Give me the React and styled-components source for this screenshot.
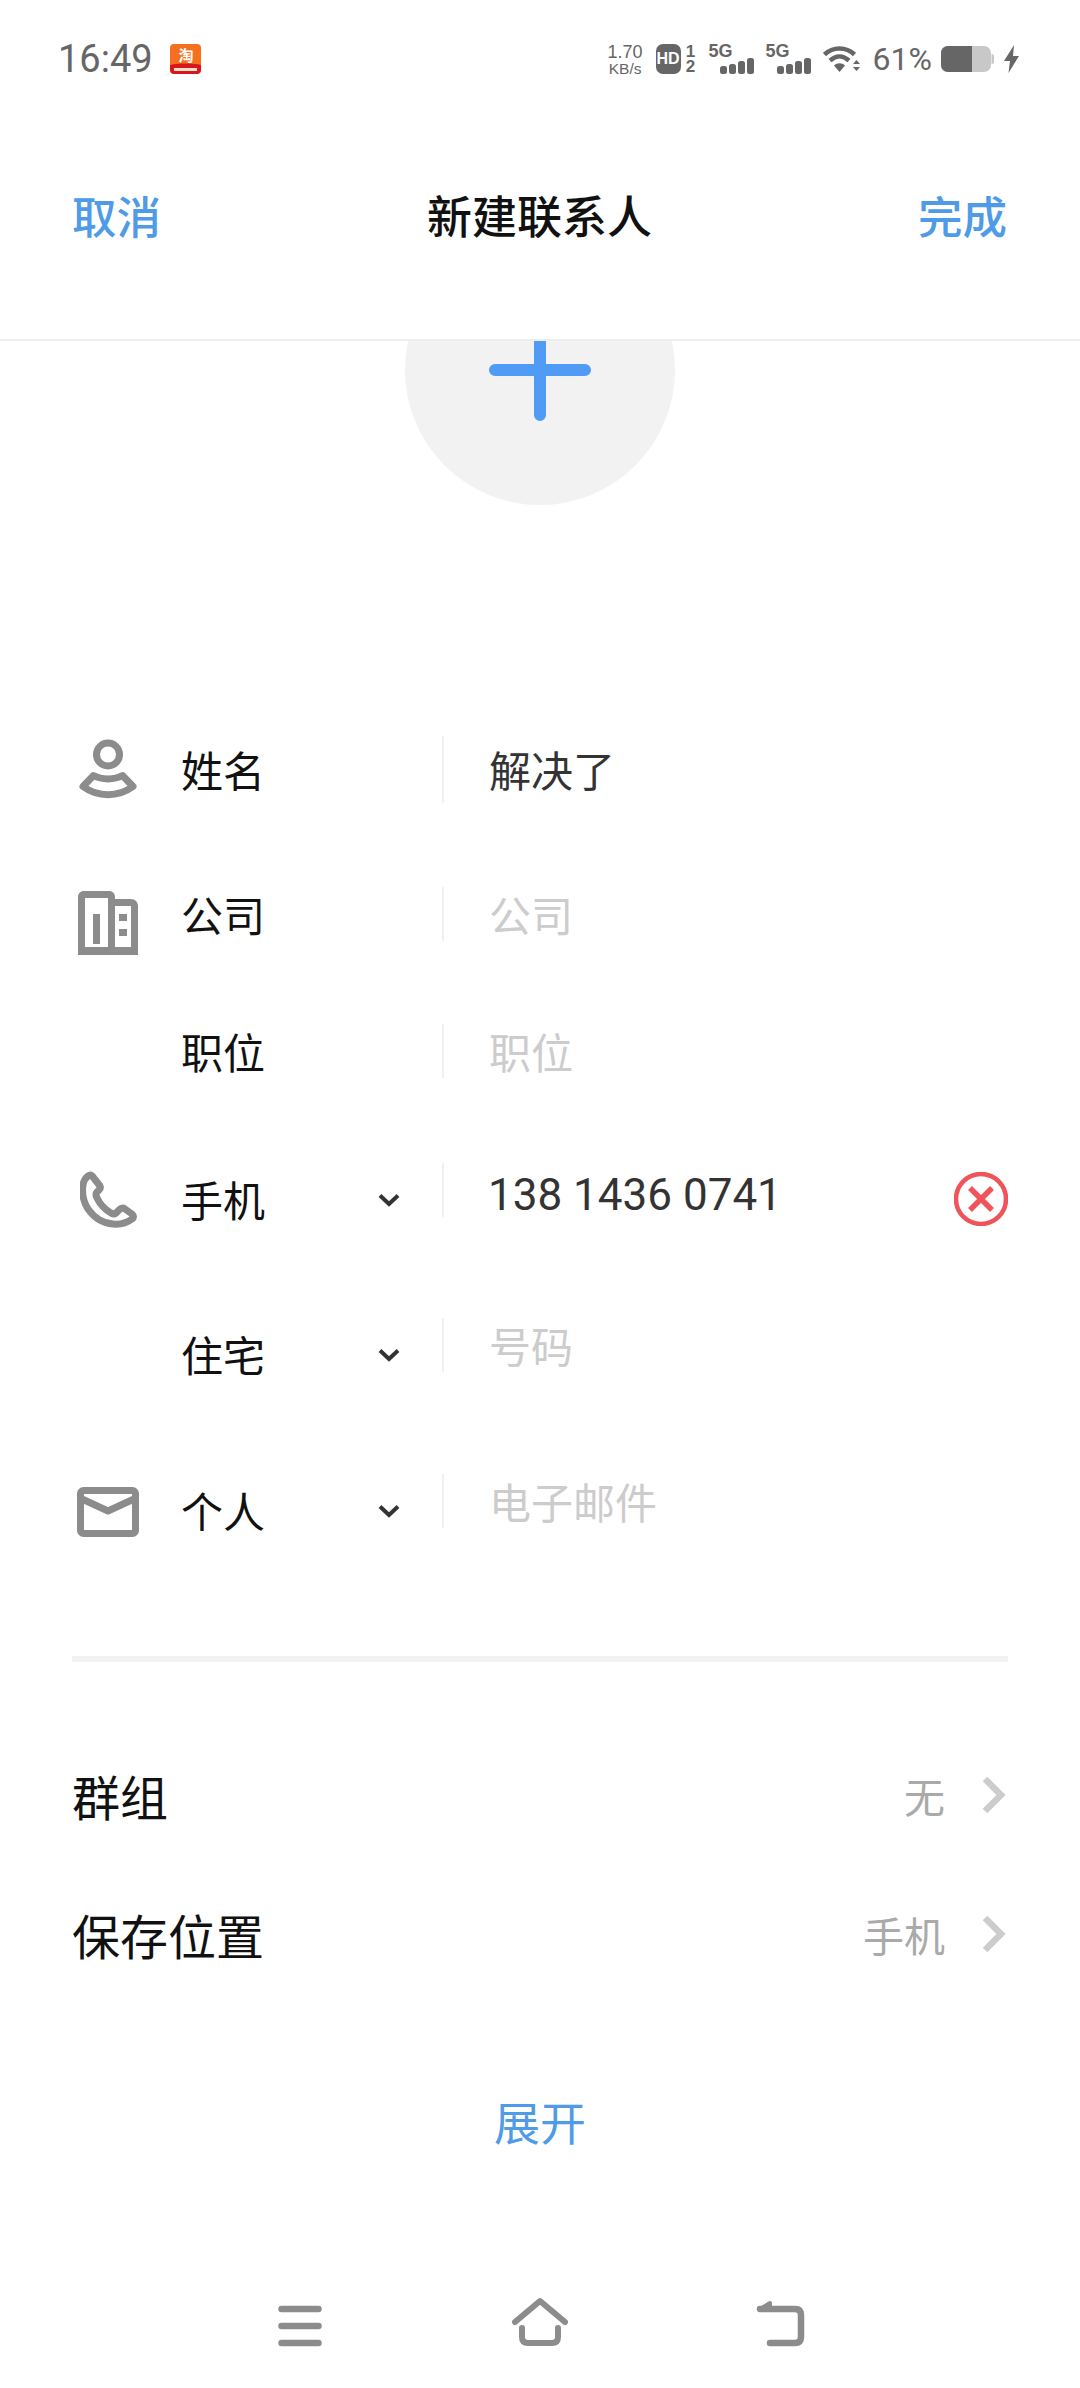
import React from "react"
import styled, { createGlobalStyle } from "styled-components"

const cjk = `"Noto Sans CJK SC", "Noto Sans", sans-serif`
const blue = "#4f9be8"

const Global = createGlobalStyle`
  html, body { margin: 0; padding: 0; background: #fff; }
  body { font-family: ${cjk}; }
`

const Page = styled.div`
  width: 1080px;
  height: 2388px;
  display: flex;
  flex-direction: column;
  background: #fff;
  overflow: hidden;
`

/* top */
const Header = styled.header`
  height: 341px;
  flex: none;
  display: flex;
  flex-direction: column;
  border-bottom: 2px solid #eeeeee;
  box-sizing: border-box;
`
const StatusBar = styled.div`
  height: 118px;
  flex: none;
  display: flex;
  align-items: center;
  justify-content: space-between;
  padding: 0 61px 0 58px;
`
const StatusLeft = styled.div`
  display: flex;
  align-items: center;
  gap: 15px;
`
const Clock = styled.span`
  font: 400 38px/1 Roboto, sans-serif;
  color: #666;
`
const StatusRight = styled.div`
  display: flex;
  align-items: center;
  color: #666;
`
const Speed = styled.div`
  display: flex;
  flex-direction: column;
  align-items: center;
  font: 400 15.500px/15px "Liberation Sans", sans-serif;
  margin-right: 13px;
`
const SpeedValue = styled.span`
  font-size: 18px;
  line-height: 18px;
`
const HdBadge = styled.span`
  width: 25px;
  height: 30px;
  border-radius: 7px;
  background: #666;
  color: #fff;
  display: flex;
  align-items: center;
  justify-content: center;
  font: 700 16px/1 "Liberation Sans", sans-serif;
`
const HdSlots = styled.div`
  width: 16px;
  display: flex;
  flex-direction: column;
  align-items: center;
  font: 700 17px/15px "Liberation Sans", sans-serif;
  margin-left: 2px;
  margin-right: 10px;
`
const Signal = styled.div`
  width: 45px;
  margin-right: 12px;
  display: flex;
  flex-direction: column;
  font: 700 18px/15px "Liberation Sans", sans-serif;
`
const Bars = styled.div`
  display: flex;
  align-items: flex-end;
  justify-content: flex-end;
  gap: 2px;
  height: 16px;
  margin-top: -1px;
`
const Bar = styled.i`
  width: 7px;
  height: ${p => p.$h}px;
  border-radius: 2.500px;
  background: #666;
`
const Percent = styled.span`
  font: 400 32px/1 Roboto, sans-serif;
  color: #666;
  margin: 0 9px 0 12px;
`
const TitleBar = styled.div`
  flex: 1;
  display: flex;
  align-items: center;
  justify-content: space-between;
  padding: 0 73px 28px 72px;
`
const NavAction = styled.span`
  font-size: 44.500px;
  font-weight: 500;
  color: ${blue};
`
const Title = styled.span`
  font-size: 45px;
  font-weight: 500;
  color: #111;
`

/* avatar */
const AvatarArea = styled.div`
  height: 398px;
  flex: none;
  overflow: hidden;
  display: flex;
  justify-content: center;
`
const AvatarCircle = styled.div`
  width: 270px;
  height: 270px;
  margin-top: -106px;
  flex: none;
  border-radius: 50%;
  background: #f2f2f2;
  display: flex;
  align-items: center;
  justify-content: center;
`

/* form */
const Form = styled.div`
  padding: 0 72px;
  display: flex;
  flex-direction: column;
`
const Row = styled.div`
  display: grid;
  grid-template-columns: 109px 261px 2px 1fr 54px;
  grid-template-rows: 60px;
  align-items: center;
  margin-top: ${p => p.$top || 0}px;
`
const IconSlot = styled.div`
  width: 72px;
  display: flex;
  justify-content: center;
  margin-top: ${p => p.$drop || 0}px;
`
const LabelCell = styled.div`
  display: flex;
  align-items: center;
  justify-content: space-between;
  padding-right: 42px;
  margin-top: ${p => p.$drop || 0}px;
`
const Label = styled.span`
  font-size: 42px;
  line-height: 60px;
  color: #111;
`
const Rule = styled.div`
  width: 2px;
  height: ${p => p.$h || 54}px;
  background: #f0f0f0;
`
const Value = styled.span`
  padding-left: 45px;
  font-size: 42px;
  line-height: 60px;
  color: ${p => (p.$empty ? "#cccccc" : "#333333")};
`
const Phone = styled(Value)`
  font-family: Roboto, sans-serif;
  font-size: 44px;
  padding-left: 44px;
  margin-top: 10px;
`
const ClearSlot = styled.div`
  display: flex;
  margin-top: 17px;
`

/* settings */
const Divider = styled.div`
  height: 6px;
  margin: 125px 72px 0;
  background: #f2f2f2;
  flex: none;
`
const Settings = styled.div`
  padding: 0 74px 0 72px;
  display: flex;
  flex-direction: column;
`
const SettingRow = styled.div`
  height: 70px;
  margin-top: ${p => p.$top}px;
  display: flex;
  align-items: center;
  justify-content: space-between;
`
const SettingName = styled.span`
  font-size: 48px;
  color: #111;
`
const SettingValue = styled.div`
  display: flex;
  align-items: center;
  gap: 37px;
  font-size: 41px;
  color: #aaaaaa;
`
const Expand = styled.div`
  margin-top: 116px;
  text-align: center;
  font-size: 46px;
  line-height: 70px;
  color: ${blue};
`
const NavBar = styled.nav`
  margin-top: auto;
  height: 92px;
  flex: none;
  box-sizing: border-box;
  padding: 0 270px 0;
  display: flex;
  align-items: flex-start;
  justify-content: space-between;
`

const Svg = styled.svg`
  display: block;
  flex: none;
`

const TaobaoIcon = () => (
  <Svg width="31" height="30" viewBox="0 0 31 30" style={{ marginLeft: 2 }}>
    <rect width="31" height="30" rx="4" fill="#f4701f" />
    <path d="M0 21C8 19 23 19 31 21V26C31 28 29 30 27 30H4C2 30 0 28 0 26Z" fill="#d9161d" />
    <text x="16" y="17" textAnchor="middle" fontSize="15" fontWeight="700" fill="#fff" fontFamily="Noto Sans CJK SC">淘</text>
    <rect x="4" y="24" width="23" height="3" fill="#ffe1c8" />
  </Svg>
)

const WifiIcon = () => (
  <Svg width="38" height="28" viewBox="0 0 38 28">
    <g fill="none" stroke="#666" strokeWidth="4.500">
      <path d="M1.500 9.500C10 1.500 23 1.500 31.500 9.500" />
      <path d="M7 15.500C13 10 20 10 26 15.500" />
    </g>
    <path d="M11 20.500C14 17.500 19 17.500 22 20.500L16.500 27Z" fill="#666" />
    <path d="M30 19l3.500 -4 3.500 4zM30 22l3.500 4 3.500 -4z" fill="#666" />
  </Svg>
)

const BatteryIcon = () => (
  <Svg width="53" height="26" viewBox="0 0 53 26">
    <rect x="0" y="0" width="50" height="26" rx="7" fill="#c8c8c8" />
    <path d="M7 0H31V26H7C3 26 0 23 0 19V7C0 3 3 0 7 0Z" fill="#666" />
    <path d="M50.500 8H51C52 8 53 9 53 10V16C53 17 52 18 51 18H50.500Z" fill="#c8c8c8" />
  </Svg>
)

const BoltIcon = () => (
  <Svg width="15" height="28" viewBox="0 0 15 28" style={{ marginLeft: 10 }}>
    <path d="M10 0L0 16h6L4.500 28 15 11H9z" fill="#666" />
  </Svg>
)

const PlusIcon = () => (
  <Svg width="102" height="118" viewBox="0 0 102 118">
    <path d="M6 59H96M51 59V104" stroke="#4f9bf5" strokeWidth="12" strokeLinecap="round" />
    <path d="M45 59V0h12v59z" fill="#4f9bf5" />
  </Svg>
)

const PersonIcon = () => (
  <Svg width="60" height="60" viewBox="0 0 60 60">
    <g fill="none" stroke="#8c8c8c" strokeWidth="7" strokeLinejoin="round">
      <circle cx="30" cy="15.500" r="11.500" />
      <path d="M15.500 36.500C24 41 36 41 44.500 36.500L55 47.500C40 58.500 20 58.500 5 47.500Z" />
    </g>
  </Svg>
)

const BuildingIcon = () => (
  <Svg width="60" height="64" viewBox="0 0 60 64">
    <path
      fillRule="evenodd"
      fill="#8c8c8c"
      d="M6 0H31C34.500 0 37 2.500 37 6V8H53C57 8 60 11 60 15V64H0V6C0 2.500 2.500 0 6 0ZM7 7V56H30V7ZM37 15V56H53V15ZM15 23H22V53H15ZM41 23H49V30H41ZM41 38H49V45H41Z"
    />
  </Svg>
)

const PhoneIcon = () => (
  <Svg width="57" height="57" viewBox="0 0 57 57">
    <path
      d="M8 5Q11 3 13 6L20 15Q21 17 19 19L17 21Q15 23 17 27Q22 37 31 42Q35 44 37 41L39 39Q42 36 45 38L52 43Q55 46 52 48Q44 54 33 53Q18 52 8 38Q1 27 3 14Q4 8 8 5Z"
      fill="none"
      stroke="#8c8c8c"
      strokeWidth="7"
      strokeLinejoin="round"
    />
  </Svg>
)

const MailIcon = () => (
  <Svg width="62" height="50" viewBox="0 0 62 50">
    <rect x="3.500" y="3.500" width="55" height="43" rx="3" fill="none" stroke="#8c8c8c" strokeWidth="7" />
    <path d="M5 12L31 24L57 12" fill="none" stroke="#8c8c8c" strokeWidth="7" strokeLinejoin="round" />
  </Svg>
)

const Chevron = () => (
  <Svg width="22" height="14" viewBox="0 0 22 14" style={{ marginTop: 2 }}>
    <path d="M2 2.500L11 11L20 2.500" fill="none" stroke="#333" strokeWidth="4" />
  </Svg>
)

const ClearIcon = () => (
  <Svg width="54" height="54" viewBox="0 0 54 54">
    <circle cx="27" cy="27" r="25" fill="none" stroke="#ee5459" strokeWidth="4.500" />
    <path d="M16 16L38 38M38 16L16 38" stroke="#ee5459" strokeWidth="5.500" />
  </Svg>
)

const ForwardIcon = () => (
  <Svg width="24" height="38" viewBox="0 0 24 38">
    <path d="M3 3L19 19L3 35" fill="none" stroke="#cccccc" strokeWidth="6.500" />
  </Svg>
)

const MenuIcon = () => (
  <Svg width="60" height="60" viewBox="0 0 60 60">
    <path d="M11.500 13H48.500M11.500 30H48.500M11.500 47H48.500" stroke="#8c8c8c" strokeWidth="6.500" strokeLinecap="round" />
  </Svg>
)

const HomeIcon = () => (
  <Svg width="60" height="60" viewBox="0 0 60 60">
    <path d="M5 26L30 5L55 26" fill="none" stroke="#8c8c8c" strokeWidth="6" strokeLinecap="round" strokeLinejoin="round" />
    <path d="M12 32V41C12 45 14 47 18 47H42C46 47 48 45 48 41V32" fill="none" stroke="#8c8c8c" strokeWidth="6" strokeLinecap="round" />
  </Svg>
)

const BackIcon = () => (
  <Svg width="60" height="60" viewBox="0 0 60 60">
    <path d="M10 13H45C49 13 51 15 51 19V41C51 45 49 47 45 47H20" fill="none" stroke="#8c8c8c" strokeWidth="6.500" strokeLinecap="round" />
    <path d="M10 13L20 7V13Z" fill="#8c8c8c" stroke="#8c8c8c" strokeWidth="4" strokeLinejoin="round" />
  </Svg>
)

const rows = [
  { top: 0, label: "姓名", value: "解决了", icon: <PersonIcon />, ruleH: 67 },
  { top: 85, label: "公司", placeholder: "公司", icon: <BuildingIcon />, iconDrop: 18 },
  { top: 77, label: "职位", placeholder: "职位" },
  { top: 79, label: "手机", phone: "138 1436 0741", icon: <PhoneIcon />, select: true, clear: true, iconDrop: 18 },
  { top: 95, label: "住宅", placeholder: "号码", select: true },
  { top: 96, label: "个人", placeholder: "电子邮件", icon: <MailIcon />, select: true, iconDrop: 22 },
]

const App = () => {
  return (
    <Page>
      <Global />
      <Header>
        <StatusBar>
          <StatusLeft>
            <Clock>16:49</Clock>
            <TaobaoIcon />
          </StatusLeft>
          <StatusRight>
            <Speed>
              <SpeedValue>1.70</SpeedValue>
              <span>KB/s</span>
            </Speed>
            <HdBadge>HD</HdBadge>
            <HdSlots>
              <span>1</span>
              <span>2</span>
            </HdSlots>
            <Signal>
              5G
              <Bars>
                <Bar $h={8} />
                <Bar $h={10} />
                <Bar $h={13} />
                <Bar $h={16} />
              </Bars>
            </Signal>
            <Signal>
              5G
              <Bars>
                <Bar $h={8} />
                <Bar $h={10} />
                <Bar $h={13} />
                <Bar $h={16} />
              </Bars>
            </Signal>
            <WifiIcon />
            <Percent>61%</Percent>
            <BatteryIcon />
            <BoltIcon />
          </StatusRight>
        </StatusBar>
        <TitleBar>
          <NavAction>取消</NavAction>
          <Title>新建联系人</Title>
          <NavAction>完成</NavAction>
        </TitleBar>
      </Header>

      <AvatarArea>
        <AvatarCircle>
          <PlusIcon />
        </AvatarCircle>
      </AvatarArea>

      <Form>
        {rows.map(r => (
          <Row key={r.label} $top={r.top}>
            <IconSlot $drop={r.iconDrop}>{r.icon}</IconSlot>
            <LabelCell $drop={r.select ? 18 : 0}>
              <Label>{r.label}</Label>
              {r.select && <Chevron />}
            </LabelCell>
            <Rule $h={r.ruleH} />
            {r.phone ? <Phone>{r.phone}</Phone> : <Value $empty={!r.value}>{r.value || r.placeholder}</Value>}
            {r.clear && (
              <ClearSlot>
                <ClearIcon />
              </ClearSlot>
            )}
          </Row>
        ))}
      </Form>

      <Divider />

      <Settings>
        <SettingRow $top={98}>
          <SettingName>群组</SettingName>
          <SettingValue>
            无
            <ForwardIcon />
          </SettingValue>
        </SettingRow>
        <SettingRow $top={69}>
          <SettingName>保存位置</SettingName>
          <SettingValue>
            手机
            <ForwardIcon />
          </SettingValue>
        </SettingRow>
      </Settings>

      <Expand>展开</Expand>

      <NavBar>
        <MenuIcon />
        <HomeIcon />
        <BackIcon />
      </NavBar>
    </Page>
  )
}

export default App
